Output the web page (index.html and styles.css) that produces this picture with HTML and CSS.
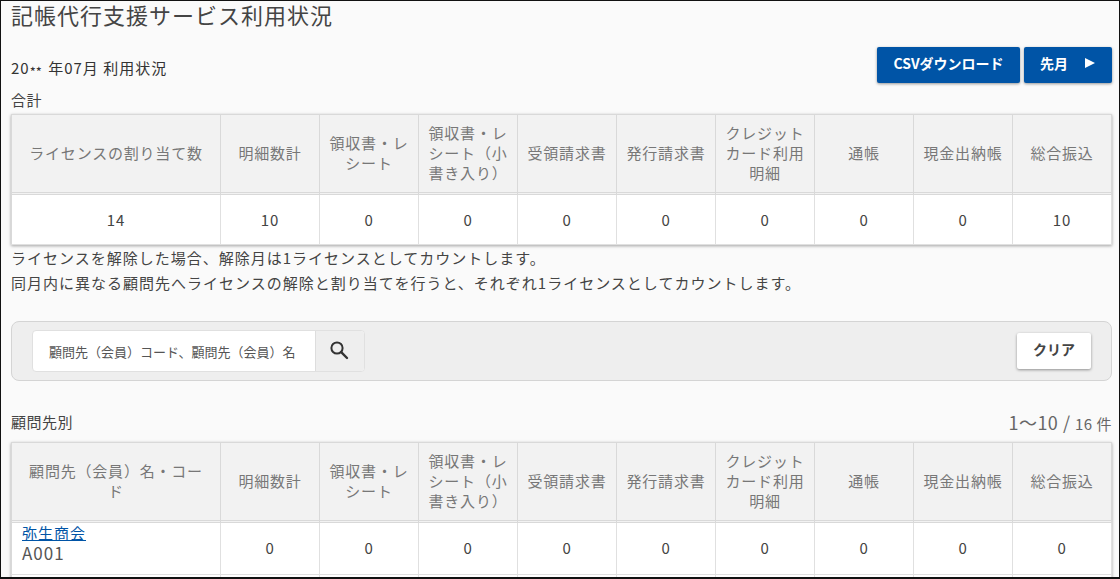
FILE: index.html
```html
<!DOCTYPE html>
<html lang="ja">
<head>
<meta charset="utf-8">
<title>記帳代行支援サービス利用状況</title>
<link rel="stylesheet" href="styles.css">
</head>
<body>
<div class="frame">
  <h1 class="title">記帳代行支援サービス利用状況</h1>
  <div class="toolbar">
    <div class="period">20<span class="mask">**</span> 年07月 利用状況</div>
    <div class="actions">
      <button class="btn btn-csv">CSVダウンロード</button>
      <button class="btn btn-prev">先月<svg class="arrow" viewBox="0 0 10 10"><path d="M0 0L10 5L0 10Z" fill="#fff"/></svg></button>
    </div>
  </div>
  <div class="label label-total">合計</div>
  <table class="grid">
    <colgroup><col class="c1"><col class="c"><col class="c"><col class="c"><col class="c"><col class="c"><col class="c"><col class="c"><col class="c"><col class="c"></colgroup>
    <thead><tr>
      <th>ライセンスの割り当て数</th><th>明細数計</th><th>領収書・レシート</th><th>領収書・レシート（小書き入り）</th><th>受領請求書</th><th>発行請求書</th><th>クレジットカード利用明細</th><th>通帳</th><th>現金出納帳</th><th>総合振込</th>
    </tr></thead>
    <tbody><tr class="row-total">
      <td>14</td><td>10</td><td>0</td><td>0</td><td>0</td><td>0</td><td>0</td><td>0</td><td>0</td><td>10</td>
    </tr></tbody>
  </table>
  <p class="note note-first">ライセンスを解除した場合、解除月は1ライセンスとしてカウントします。</p>
  <p class="note">同月内に異なる顧問先へライセンスの解除と割り当てを行うと、それぞれ1ライセンスとしてカウントします。</p>
  <div class="search">
    <div class="search-group">
      <div class="search-input">顧問先（会員）コード、顧問先（会員）名</div>
      <div class="search-btn"><svg viewBox="0 0 20 20" width="20" height="20"><circle cx="8" cy="8" r="5.6" fill="none" stroke="#333" stroke-width="2"/><path d="M12.2 12.2L18 18" stroke="#333" stroke-width="2.4" stroke-linecap="round"/></svg></div>
    </div>
    <button class="btn-clear">クリア</button>
  </div>
  <div class="list-head">
    <div class="label">顧問先別</div>
    <div class="count"><span class="count-num">1〜10 / </span><span class="count-small">16 件</span></div>
  </div>
  <table class="grid">
    <colgroup><col class="c1"><col class="c"><col class="c"><col class="c"><col class="c"><col class="c"><col class="c"><col class="c"><col class="c"><col class="c"></colgroup>
    <thead><tr>
      <th>顧問先（会員）名・コード</th><th>明細数計</th><th>領収書・レシート</th><th>領収書・レシート（小書き入り）</th><th>受領請求書</th><th>発行請求書</th><th>クレジットカード利用明細</th><th>通帳</th><th>現金出納帳</th><th>総合振込</th>
    </tr></thead>
    <tbody><tr class="row-client">
      <td class="client"><a href="#">弥生商会</a><div class="code">A001</div></td><td>0</td><td>0</td><td>0</td><td>0</td><td>0</td><td>0</td><td>0</td><td>0</td><td>0</td>
    </tr>
    <tr class="row-client">
      <td></td><td></td><td></td><td></td><td></td><td></td><td></td><td></td><td></td><td></td>
    </tr></tbody>
  </table>
</div>
</body>
</html>
```

FILE: styles.css
```css
* { box-sizing: border-box; }
html, body { margin: 0; height: 100%; overflow: hidden; }
body { font-family: "Noto Sans CJK JP", "Noto Sans", sans-serif; color: #444; background: #fafafa; }
.frame { height: 579px; border: 1px solid #111; border-width: 1px 1px 2px 1px; padding: 0 7px 0 10px; overflow: hidden; background: #fafafa; }
.title { margin: 0; padding-top: 1px; font-size: 22px; font-weight: 400; line-height: 24px; height: 29px; letter-spacing: 1px; color: #444; }
.toolbar { display: flex; justify-content: space-between; align-items: flex-end; margin-top: 17px; height: 36px; }
.period { font-size: 15px; line-height: 20px; color: #333; padding-bottom: 4px; letter-spacing: 1px; }
.mask { font-size: 13px; letter-spacing: 0; margin-right: 2px; position: relative; top: 3px; }
.actions { display: flex; gap: 4px; }
.btn { height: 36px; border: 0; border-radius: 2px; background: #0054a6; color: #fff; font-family: inherit; font-size: 14px; font-weight: 700; box-shadow: 0 1px 3px rgba(0,0,0,.4); padding: 0 0 5px; }
.btn-csv { width: 143px; }
.btn-prev { width: 88px; display: flex; align-items: center; justify-content: center; gap: 17px; padding-right: 1px; }
.arrow { width: 10px; height: 10px; }
.label { font-size: 15px; line-height: 20px; color: #444; letter-spacing: .5px; }
.label-total { margin-top: 7px; height: 20px; margin-bottom: 4px; }
.grid { width: 1101px; table-layout: fixed; border-collapse: separate; border-spacing: 0; font-size: 15px; letter-spacing: .8px; background: #fff; box-shadow: 0 1px 3px rgba(0,0,0,.35); }
.c1 { width: 210px; }
.c { width: 99px; }
.grid th { height: 81px; background: #f2f2f2; color: #777; font-weight: 400; line-height: 20px; padding: 0 6px 2px; border: 1px solid #d9d9d9; border-width: 1px 1px 3px 0; border-bottom-style: double; }
.grid th:first-child { padding: 0 12px 2px; }
.grid th:first-child, .grid td:first-child { border-left: 1px solid #d9d9d9; }
.grid td { text-align: center; color: #444; border-right: 1px solid #e0e0e0; border-bottom: 1px solid #e0e0e0; padding: 0; }
.row-total td { height: 50px; }
.row-client td { height: 52px; padding-bottom: 2px; }
.grid .client { text-align: left; vertical-align: top; padding: 0 10px; line-height: 20px; }
.client a { color: #0054a6; font-size: 15px; display: block; letter-spacing: 1px; }
.code { font-size: 17px; line-height: 20px; letter-spacing: 1px; color: #555; }
.note { margin: 0; font-size: 15px; line-height: 20px; color: #444; height: 25px; padding-top: 3px; letter-spacing: 1px; white-space: nowrap; }
.search { margin-top: 26px; height: 60px; background: #eee; border: 1px solid #d4d4d4; border-radius: 8px; display: flex; justify-content: space-between; align-items: center; padding: 0 20px; }
.search-group { display: flex; height: 42px; width: 333px; background: #fff; border: 1px solid #e0e0e0; border-radius: 4px; overflow: hidden; }
.search-input { flex: 1; font-size: 13px; line-height: 42px; padding-left: 16px; color: #555; white-space: nowrap; }
.search-btn { width: 49px; background: #eee; border-left: 1px solid #ddd; display: flex; align-items: center; justify-content: center; padding: 0 2px 3px 0; }
.btn-clear { width: 74px; height: 36px; border: 0; background: #fff; font-family: inherit; font-size: 14px; font-weight: 700; color: #444; box-shadow: 0 1px 3px rgba(0,0,0,.4); border-radius: 2px; padding: 0 0 5px; }
.list-head { display: flex; justify-content: space-between; align-items: center; margin-top: 29px; height: 24px; margin-bottom: 8px; }
.count { color: #666; letter-spacing: .5px; }
.count-num { font-size: 18px; }
.count-small { font-size: 15px; }
```
